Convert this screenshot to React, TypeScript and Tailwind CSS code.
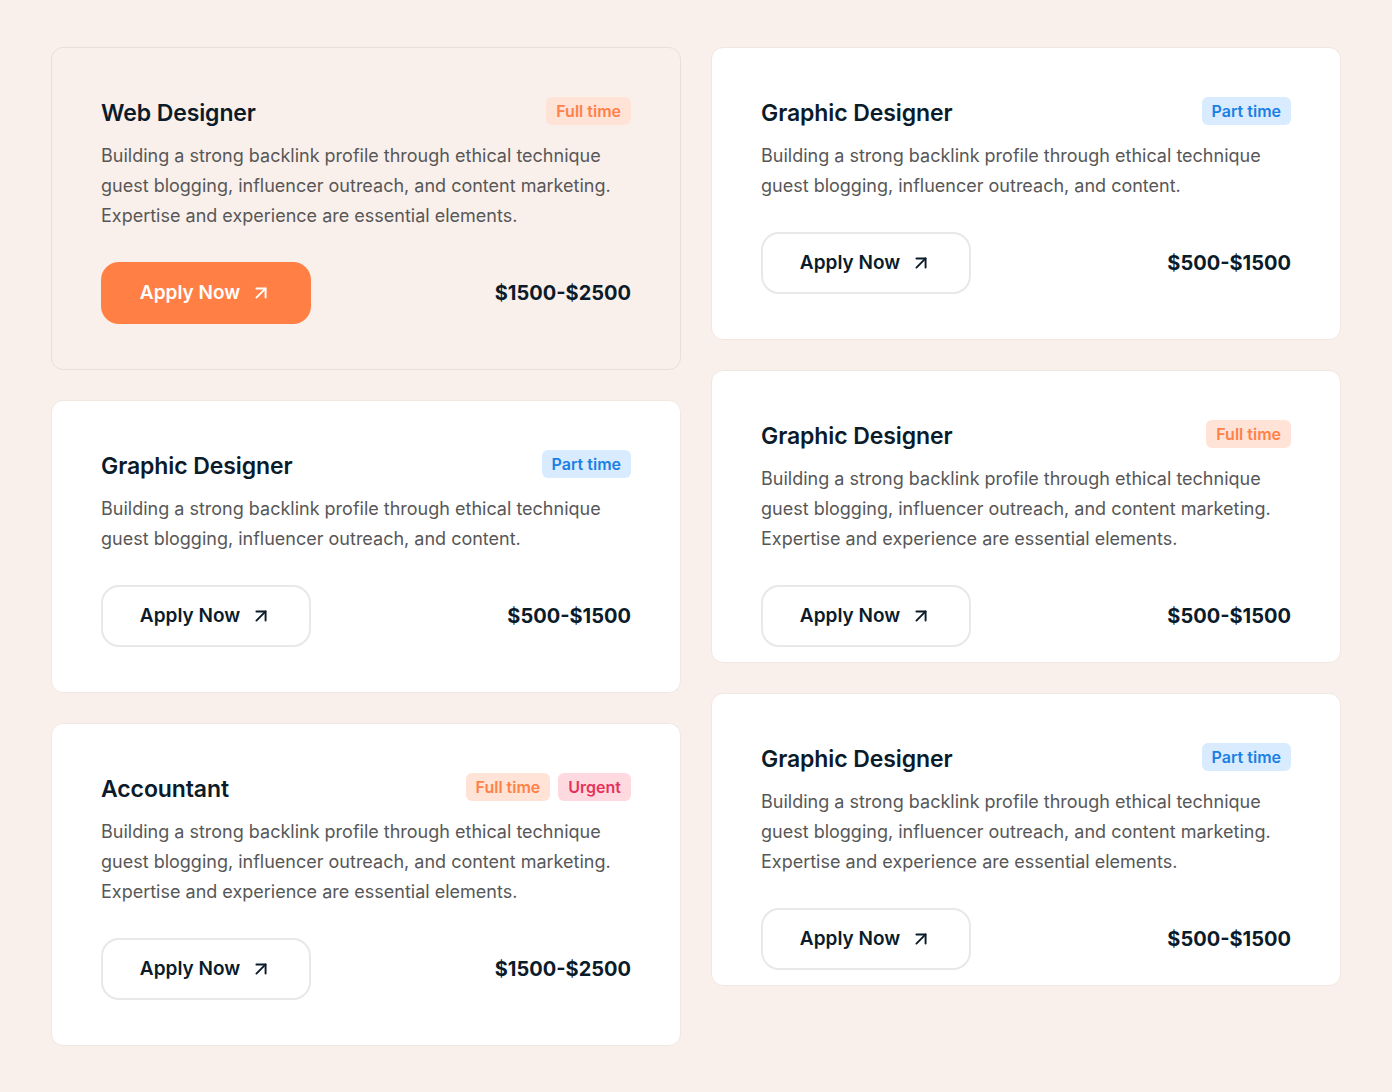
import { ArrowUpRight } from 'lucide-react';

type Tag = 'full' | 'part' | 'urgent';

interface Job {
  title: string;
  tags: Tag[];
  text: string[];
  price: string;
  active?: boolean;
}

const TAG_STYLE: Record<Tag, { label: string; cls: string }> = {
  full: { label: 'Full time', cls: 'bg-[#ffe3d6] text-[#ff8147]' },
  part: { label: 'Part time', cls: 'bg-[#d9ebff] text-[#1b7fe3]' },
  urgent: { label: 'Urgent', cls: 'bg-[#ffd9e0] text-[#e4335b]' },
};

const LONG = [
  'Building a strong backlink profile through ethical technique',
  'guest blogging, influencer outreach, and content marketing.',
  'Expertise and experience are essential elements.',
];
const SHORT = [
  'Building a strong backlink profile through ethical technique',
  'guest blogging, influencer outreach, and content.',
];

const LEFT: Job[] = [
  { title: 'Web Designer', tags: ['full'], text: LONG, price: '$1500-$2500', active: true },
  { title: 'Graphic Designer', tags: ['part'], text: SHORT, price: '$500-$1500' },
  { title: 'Accountant', tags: ['full', 'urgent'], text: LONG, price: '$1500-$2500' },
];

const RIGHT: Job[] = [
  { title: 'Graphic Designer', tags: ['part'], text: SHORT, price: '$500-$1500' },
  { title: 'Graphic Designer', tags: ['full'], text: LONG, price: '$500-$1500' },
  { title: 'Graphic Designer', tags: ['part'], text: LONG, price: '$500-$1500' },
];

function JobCard({ job, fixed }: { job: Job; fixed?: boolean }) {
  return (
    <div
      className={`rounded-[12px] border px-[49px] pt-[50px] pb-[45px] ${
        job.active ? 'bg-[#faf0eb] border-[#e9dfda]' : 'bg-white border-[#f1e7e2]'
      } ${fixed ? 'h-[293px]' : ''}`}
    >
      <div className="flex items-center justify-between h-[30px]">
        <h3 className="text-[23px] font-semibold text-[#0b1b2a] tracking-[-0.1px]">{job.title}</h3>
        <div className="flex gap-2 -mt-[4px]">
          {job.tags.map((t) => (
            <span
              key={t}
              className={`h-[28px] px-[10px] rounded-[6px] flex items-center text-[16px] font-semibold ${TAG_STYLE[t].cls}`}
            >
              {TAG_STYLE[t].label}
            </span>
          ))}
        </div>
      </div>
      <p className="mt-[13px] text-[18px] leading-[30px] text-[#575757]">
        {job.text.map((l, i) => (
          <span key={i} className="block">
            {l}
          </span>
        ))}
      </p>
      <div className="mt-[31px] flex items-center justify-between">
        <button
          className={`w-[210px] h-[62px] rounded-[18px] flex items-center justify-center gap-[10px] text-[19px] font-semibold ${
            job.active
              ? 'bg-[#ff7f45] text-white'
              : 'bg-white text-[#0b1b2a] border-2 border-[#e8e8e8]'
          }`}
        >
          Apply Now
          <ArrowUpRight className="w-[22px] h-[22px]" strokeWidth={2.1} />
        </button>
        <span className="text-[20px] font-bold text-[#0b1b2a]">{job.price}</span>
      </div>
    </div>
  );
}

export default function App() {
  return (
    <div
      className="min-h-[1092px] bg-[#f9f0eb] pl-[51px] pt-[47px]"
      style={{ fontFamily: 'Inter, "Noto Sans", sans-serif' }}
    >
      <div className="flex gap-[30px] items-start">
        <div className="w-[630px] flex flex-col gap-[30px]">
          {LEFT.map((j, i) => (
            <JobCard key={i} job={j} />
          ))}
        </div>
        <div className="w-[630px] flex flex-col gap-[30px]">
          {RIGHT.map((j, i) => (
            <JobCard key={i} job={j} fixed />
          ))}
        </div>
      </div>
    </div>
  );
}
